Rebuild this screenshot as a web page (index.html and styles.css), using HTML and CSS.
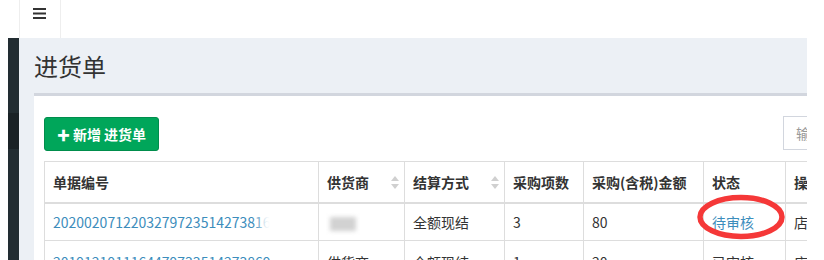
FILE: index.html
```html
<!DOCTYPE html>
<html lang="zh-CN">
<head>
<meta charset="utf-8">
<title>进货单</title>
<link rel="stylesheet" href="styles.css">
</head>
<body>
<div class="app">
  <header class="topbar">
    <div class="topbar-edge"></div>
    <a class="toggle" href="#">
      <svg width="13" height="11" viewBox="0 0 13 11"><rect x="0" y="0" width="13" height="2" fill="#333"/><rect x="0" y="4.5" width="13" height="2" fill="#333"/><rect x="0" y="9" width="13" height="2" fill="#333"/></svg>
    </a>
  </header>
  <div class="main">
    <div class="margin-left"></div>
    <aside class="sidebar">
      <div class="sb-item"></div>
      <div class="sb-item active"></div>
    </aside>
    <section class="content">
      <h1 class="page-title">进货单</h1>
      <div class="box">
        <div class="toolbar">
          <button class="btn-add"><span class="plus">✚</span>新增 进货单</button>
          <div class="search">输入</div>
        </div>
        <table class="grid">
          <colgroup>
            <col class="c1"><col class="c2"><col class="c3"><col class="c4"><col class="c5"><col class="c6"><col class="c7">
          </colgroup>
          <thead>
            <tr>
              <th>单据编号</th>
              <th class="sortable">供货商<span class="sort"><svg width="8" height="13" viewBox="0 0 8 13"><path d="M4 0 L8 5 L0 5 Z" fill="#d0d0d0"/><path d="M0 8 L8 8 L4 13 Z" fill="#d0d0d0"/></svg></span></th>
              <th class="sortable">结算方式<span class="sort"><svg width="8" height="13" viewBox="0 0 8 13"><path d="M4 0 L8 5 L0 5 Z" fill="#d0d0d0"/><path d="M0 8 L8 8 L4 13 Z" fill="#d0d0d0"/></svg></span></th>
              <th>采购项数</th>
              <th>采购(含税)金额</th>
              <th>状态</th>
              <th>操作人</th>
            </tr>
          </thead>
          <tbody>
            <tr>
              <td class="first"><a class="link" href="#">2020020712203279723514273816</a><span class="fade"></span></td>
              <td><span class="smudge"></span></td>
              <td>全额现结</td>
              <td>3</td>
              <td>80</td>
              <td class="status"><a class="link" href="#">待审核</a><svg class="circle" width="92" height="50" viewBox="0 0 92 50"><ellipse cx="46" cy="25" rx="41" ry="19.5" fill="none" stroke="#f53838" stroke-width="5.5"/></svg></td>
              <td>店长</td>
            </tr>
            <tr class="row2">
              <td><a class="link" href="#">2019121911164479733514273869</a></td>
              <td>供货商</td>
              <td>全额现结</td>
              <td>1</td>
              <td>20</td>
              <td>已审核</td>
              <td>店长</td>
            </tr>
          </tbody>
        </table>
      </div>
    </section>
    <div class="margin-right"></div>
  </div>
</div>
</body>
</html>
```
FILE: styles.css
```css
* { box-sizing: border-box; }
html, body { margin: 0; padding: 0; background: #fff; }
body {
  font-family: "Noto Sans CJK SC", "Noto Sans", sans-serif;
  font-size: 14px;
  color: #333;
}
.app {
  width: 824px;
  height: 260px;
  overflow: hidden;
  display: flex;
  flex-direction: column;
}
.topbar {
  height: 38px;
  flex: none;
  display: flex;
  background: #fff;
}
.topbar-edge { width: 19px; }
.toggle {
  width: 42px;
  height: 38px;
  border-left: 1px solid #eee;
  border-right: 1px solid #eee;
  display: flex;
  justify-content: center;
  padding-top: 8px;
  padding-right: 2px;
}
.toggle svg { display: block; }
.main {
  flex: 1;
  display: grid;
  grid-template-columns: 8px 11px 788px 17px;
  min-height: 0;
}
.sidebar {
  background: #222d32;
  display: flex;
  flex-direction: column;
}
.sb-item { height: 75px; }
.sb-item.active { height: 36px; background: #1a2226; }
.content {
  background: #ecf0f5;
  overflow: hidden;
  padding: 13px 15px 0 15px;
}
.page-title {
  margin: 0;
  font-size: 24px;
  font-weight: 400;
  line-height: 30px;
  color: #333;
  height: 42px;
}
.box {
  width: 909px;
  background: #fff;
  border-top: 3px solid #d2d6de;
  padding: 21px 10px 10px 10px;
}
.toolbar {
  display: flex;
  align-items: flex-start;
  justify-content: space-between;
}
.btn-add {
  height: 34px;
  width: 115px;
  background: #00a65a;
  border: 1px solid #008d4c;
  border-radius: 3px;
  color: #fff;
  font-family: inherit;
  font-size: 14px;
  font-weight: 700;
  padding: 0;
  display: flex;
  align-items: center;
  justify-content: center;
  gap: 2px;
}
.plus { font-size: 13px; margin-right: 1px; }
.search {
  width: 150px;
  height: 34px;
  margin-top: -1px;
  border: 1px solid #d2d6de;
  color: #999;
  padding: 6px 12px;
  line-height: 20px;
}
.grid {
  margin-top: 10px;
  border-collapse: collapse;
  table-layout: fixed;
  width: 889px;
  border: 1px solid #ddd;
}
.c1 { width: 274px; }
.c2 { width: 86px; }
.c3 { width: 100px; }
.c4 { width: 79px; }
.c5 { width: 120px; }
.c6 { width: 82px; }
.grid th, .grid td {
  border: 1px solid #ddd;
  padding: 8px;
  text-align: left;
  white-space: nowrap;
  overflow: hidden;
  vertical-align: middle;
}
.grid th {
  font-weight: 700;
  height: 41px;
  line-height: 20px;
}
.grid td { height: 37px; line-height: 20px; border-top-color: #f0f0f0; }
.grid thead th { border-bottom: 2px solid #ddd; }
.row2 td { padding-top: 11px; vertical-align: top; }
.sortable { position: relative; }
.sort {
  position: absolute;
  right: 5px;
  top: 14px;
}
.sort svg { display: block; }
.link { color: #3c8dbc; text-decoration: none; }
.first { position: relative; }
.fade {
  position: absolute;
  left: 216px;
  top: 4px;
  width: 80px;
  height: 28px;
  background: #fff;
  filter: blur(4px);
}
.smudge {
  display: inline-block;
  width: 26px;
  height: 14px;
  margin-left: 3px;
  margin-top: 1px;
  vertical-align: middle;
  background: #d2d2d2;
  filter: blur(2px);
}
.status { position: relative; overflow: visible !important; }
.circle {
  position: absolute;
  left: -9px;
  top: -12px;
  pointer-events: none;
}
```
